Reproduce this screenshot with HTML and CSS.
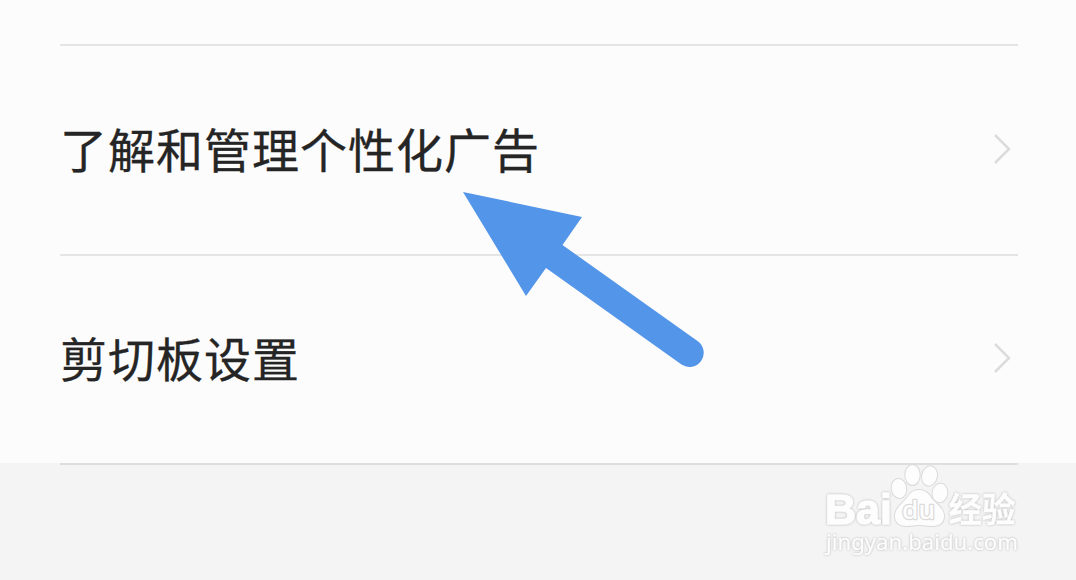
FILE: index.html
```html
<!DOCTYPE html>
<html lang="zh-CN">
<head>
    <meta charset="UTF-8">
    <title>设置</title>
    <link rel="stylesheet" href="styles.css">
</head>
<body>

<div class="panel">
    <div class="item">
        <span class="label">了解和管理个性化广告</span>
        <svg class="chevron" width="20" height="32" viewBox="0 0 20 32">
            <path d="M2 2 L16 16 L2 30"/>
        </svg>
    </div>
    <div class="item">
        <span class="label">剪切板设置</span>
        <svg class="chevron" width="20" height="32" viewBox="0 0 20 32">
            <path d="M2 2 L16 16 L2 30"/>
        </svg>
    </div>
</div>

<div class="footer"></div>

<!-- arrow pointing at the first item -->
<svg class="arrow" width="244" height="178" viewBox="462 191 244 178">
    <path d="M463 192 L582 217 L562.5 245 L697.5 341 A14.1 14.1 0 0 1 681.5 364.500 L546 268 L526 296 Z"/>
</svg>

<!-- watermark -->
<svg class="watermark" width="206" height="104" viewBox="820 460 206 104">
    <g class="mark">
        <text class="brand" x="825" y="523.500" textLength="67" lengthAdjust="spacingAndGlyphs">Bai</text>
        <ellipse cx="899" cy="488.500" rx="7.300" ry="9.500" transform="rotate(-8 899 488.500)"/>
        <ellipse cx="912.500" cy="475" rx="7.200" ry="10"/>
        <ellipse cx="929.500" cy="476" rx="7.400" ry="9.800" transform="rotate(12 929.500 476)"/>
        <ellipse cx="940" cy="493" rx="7.400" ry="9.400" transform="rotate(8 940 493)"/>
        <path d="M919 490 C926 490 929 494 932 499 C936 504 944 508 944 516 C944 523 939 526 932 526 C927 526 924 525 919 525 C914 525 911 526 906 526 C899 526 895 522 895 516 C895 508 902 504 906 499 C910 493 913 490 919 490 Z"/>
        <text class="du" x="902" y="519" textLength="33" lengthAdjust="spacingAndGlyphs">du</text>
        <text class="jingyan" x="948.500" y="521.500" textLength="67" lengthAdjust="spacingAndGlyphs">经验</text>
        <text class="url" x="826" y="550" textLength="192" lengthAdjust="spacingAndGlyphs">jingyan.baidu.com</text>
    </g>
</svg>

</body>
</html>
```

FILE: styles.css
```css
body {
    margin: 0;
    padding-top: 44px;
    height: 580px;
    box-sizing: border-box;
    display: flex;
    flex-direction: column;
    position: relative;
    overflow: hidden;
    background-color: #fcfcfc;
    font-family: "Noto Sans CJK SC", sans-serif;
}

.panel {
    height: 419px;
    padding: 0 58px 0 60px;
    display: flex;
    flex-direction: column;
}

.item {
    flex: 1;
    display: flex;
    justify-content: space-between;
    align-items: center;
    border-top: 2px solid #e5e5e5;
}

.label {
    padding-bottom: 4px;
    font-size: 47px;
    letter-spacing: 1px;
    line-height: 70px;
    color: #252525;
    -webkit-text-stroke: 0.3px #252525;
}

.chevron {
    margin-right: 5px;
    padding-bottom: 2px;
}

.chevron path {
    fill: none;
    stroke: #dcdcdc;
    stroke-width: 2.5;
}

.footer {
    flex: 1;
    padding: 0 58px 0 60px;
    background-color: #f4f4f4;
}

.footer::before {
    content: "";
    display: block;
    height: 2px;
    background-color: #dedede;
}

.arrow {
    position: absolute;
    left: 462px;
    top: 191px;
    fill: #5395e9;
}

.watermark {
    position: absolute;
    left: 820px;
    top: 460px;
}

.mark {
    fill: #fdfdfd;
    stroke: #dadada;
    stroke-width: 2;
    paint-order: stroke;
    stroke-linejoin: round;
}

.brand,
.jingyan,
.url {
    stroke: #fdfdfd;
    filter: drop-shadow(0 0 1px #b4b4b4);
}

.brand {
    font-family: "Liberation Sans", sans-serif;
    font-size: 43px;
    font-weight: bold;
    stroke-width: 1.5;
}

.du {
    font-family: "Noto Sans", sans-serif;
    font-size: 26px;
    font-weight: 500;
    stroke-width: 2.5;
}

.jingyan {
    font-family: "Noto Sans CJK SC", sans-serif;
    font-size: 34px;
    font-weight: bold;
    stroke-width: 0.3;
}

.url {
    font-family: "Noto Sans", sans-serif;
    font-size: 22px;
    stroke-width: 0.2;
}
```
